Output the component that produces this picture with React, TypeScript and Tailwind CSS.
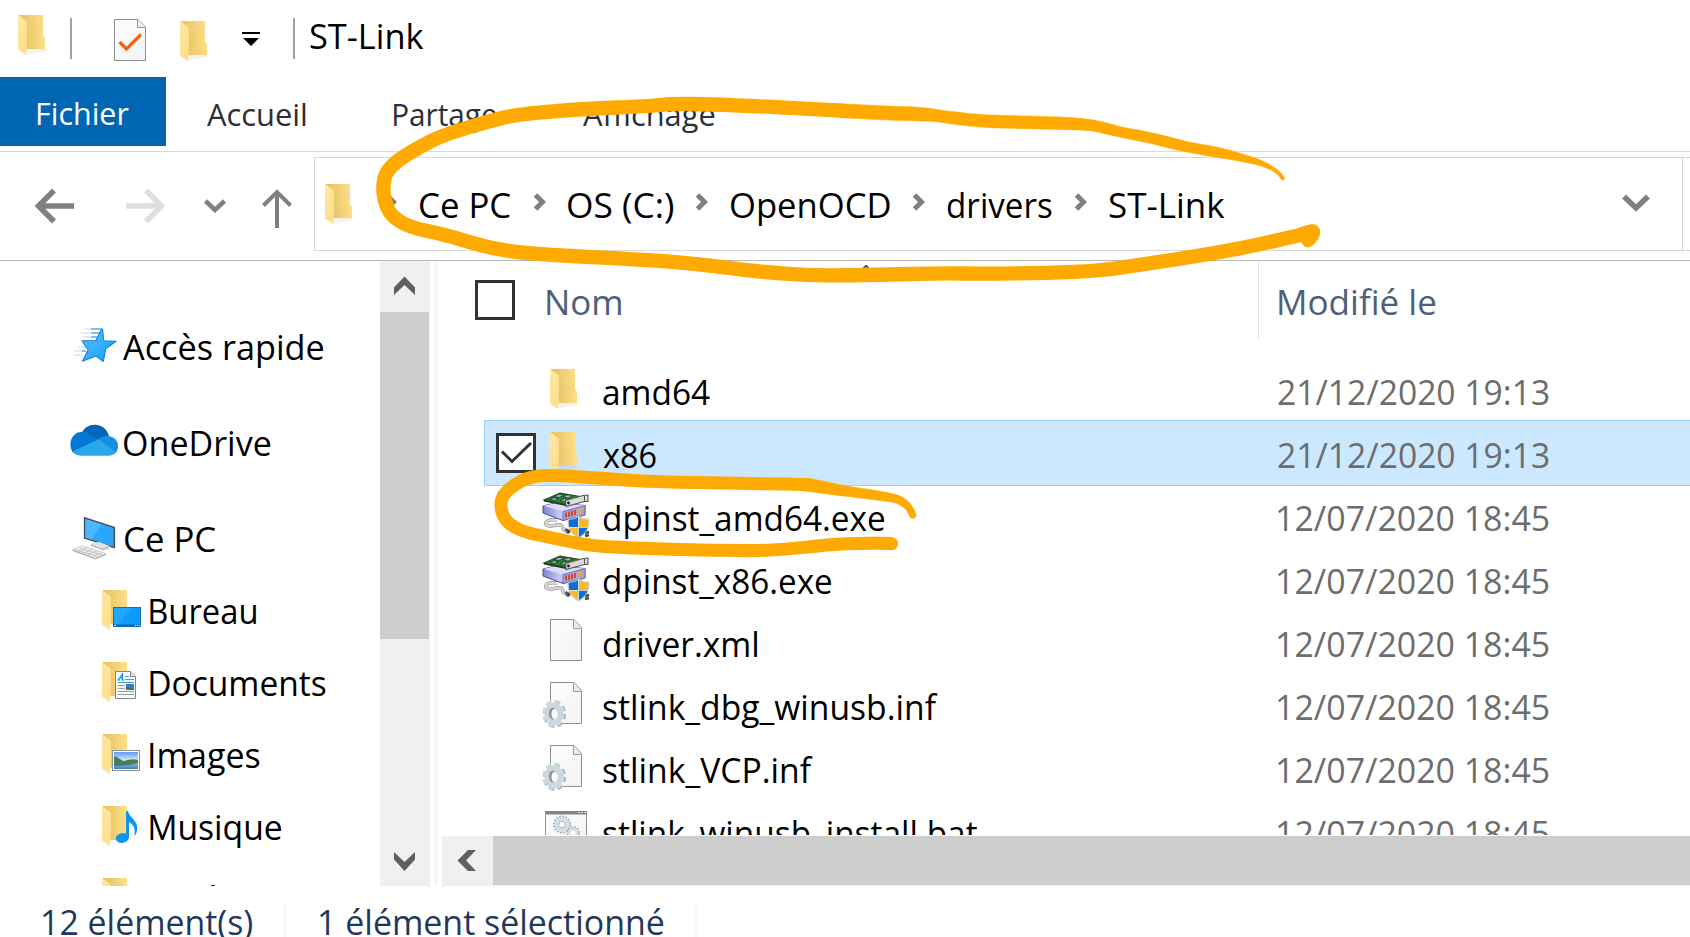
import React, { useLayoutEffect, useRef, useState } from "react";

type LabelProps = { text: string; width: number; className?: string };

/** Text condensed so that its ink fills exactly `width` pixels. */
function Label({ text, width, className = "" }: LabelProps) {
  const ref = useRef<HTMLSpanElement>(null);
  const [fit, setFit] = useState({ scale: 0.95, left: 0 });
  useLayoutEffect(() => {
    const el = ref.current;
    const ctx = document.createElement("canvas").getContext("2d");
    if (!el || !ctx) return;
    const cs = getComputedStyle(el);
    ctx.font = `${cs.fontWeight} ${cs.fontSize} ${cs.fontFamily}`;
    const m = ctx.measureText(text);
    const ink = m.actualBoundingBoxRight + m.actualBoundingBoxLeft;
    setFit({ scale: width / ink, left: m.actualBoundingBoxLeft });
  }, [text, width]);
  return (
    <span className={`block shrink-0 whitespace-nowrap ${className}`} style={{ width }}>
      <span
        ref={ref}
        className="inline-block origin-left"
        style={{ transform: `scaleX(${fit.scale}) translateX(${fit.left}px)` }}
      >
        {text}
      </span>
    </span>
  );
}

function FolderShape() {
  return (
    <>
      <path d="M8 34H30L27 36L9 40Z" fill="#000" opacity=".05" />
      <path d="M0 0H25V20L27 22.5V34H8V8Z" fill="url(#folderBack)" />
      <path d="M0 0L8.8 6.5V30L8 40L0 34.5Z" fill="url(#folderFlap)" />
    </>
  );
}

function Folder({ className = "" }: { className?: string }) {
  return (
    <svg width="30" height="41" viewBox="0 0 30 41" className={`shrink-0 ${className}`}>
      <FolderShape />
    </svg>
  );
}

function Defs() {
  return (
    <svg width="0" height="0" className="absolute">
      <defs>
        <linearGradient id="folderBack" x1="0" y1="0.4" x2="1" y2="0.3">
          <stop offset="0.2" stopColor="#eac464" />
          <stop offset="1" stopColor="#fde08a" />
        </linearGradient>
        <linearGradient id="folderFlap" x1="0" y1="0" x2="0.3" y2="1">
          <stop offset="0" stopColor="#ffe9a6" />
          <stop offset="1" stopColor="#fddf8c" />
        </linearGradient>
        <linearGradient id="paper" x1="0" y1="0" x2="1" y2="1">
          <stop offset="0" stopColor="#fdfdfd" />
          <stop offset="1" stopColor="#f1f3f5" />
        </linearGradient>
        <linearGradient id="starFill" x1="0" y1="0" x2="1" y2="1">
          <stop offset="0" stopColor="#5cc3ff" />
          <stop offset="1" stopColor="#0f9bf7" />
        </linearGradient>
        <linearGradient id="screen" x1="0" y1="0" x2="1" y2="0.6">
          <stop offset="0.5" stopColor="#4fb8fd" />
          <stop offset="0.52" stopColor="#2ba6fb" />
        </linearGradient>
        <linearGradient id="desk" x1="0" y1="0" x2="1" y2="0.6">
          <stop offset="0.5" stopColor="#22a6ff" />
          <stop offset="0.52" stopColor="#0c9bff" />
        </linearGradient>
        <linearGradient id="sky" x1="0" y1="0" x2="0" y2="1">
          <stop offset="0" stopColor="#5b9cf5" />
          <stop offset="0.5" stopColor="#d9eefc" />
          <stop offset="0.7" stopColor="#7fb2d8" />
          <stop offset="1" stopColor="#3f7fb4" />
        </linearGradient>
        <linearGradient id="drive" x1="0" y1="0" x2="1" y2="0">
          <stop offset="0" stopColor="#7f7fd6" />
          <stop offset="0.4" stopColor="#c9c9f8" />
          <stop offset="1" stopColor="#8a8ad8" />
        </linearGradient>
      </defs>
    </svg>
  );
}

function CheckedPage({ className = "" }: { className?: string }) {
  return (
    <svg width="32" height="42" viewBox="0 0 32 42" className={`shrink-0 ${className}`}>
      <path d="M.5.5H24L31.5 8V41.5H.5Z" fill="url(#paper)" stroke="#8f8f8f" />
      <path d="M23.5.5V8.5H31.5" fill="#eee" stroke="#9a9a9a" />
      <path d="M5.5 23L12.5 30L27 15.5" fill="none" stroke="#f4610c" strokeWidth="3.2" />
    </svg>
  );
}

function Page({ gear = false }: { gear?: boolean }) {
  return (
    <svg width="48" height="48" viewBox="0 0 48 48" className="-mt-px shrink-0">
      <path d="M8.5 2.5H32L39.5 10.5V43.5H8.5Z" fill="url(#paper)" stroke="#8f8f8f" />
      <path d="M31.5 2.5V11.500H39.5" fill="#ececec" stroke="#9a9a9a" />
      {gear && (
        <g>
          <ellipse cx="12.500" cy="34" rx="9.500" ry="12" fill="none" stroke="#a3b4c0" strokeWidth="4" strokeDasharray="5 3.5" />
          <ellipse cx="11.300" cy="33.500" rx="9" ry="11.500" fill="none" stroke="#ccd9e1" strokeWidth="4" strokeDasharray="5 3.2" />
          <ellipse cx="12" cy="34" rx="6.500" ry="8.500" fill="#f6f8f9" stroke="#ccd7de" strokeWidth="6" />
          <ellipse cx="10.800" cy="33.500" rx="4" ry="6" fill="#8f979c" />
          <ellipse cx="12.500" cy="34" rx="3" ry="5" fill="#fafbfb" />
        </g>
      )}
    </svg>
  );
}

function BatchFile() {
  return (
    <svg width="48" height="48" viewBox="0 0 48 48" className="-mt-px shrink-0">
      <rect x="3.5" y="5.5" width="41" height="36" fill="url(#paper)" stroke="#8f9396" />
      <rect x="3" y="5" width="42" height="3.5" fill="#7f8689" />
      <path d="M36 6.5h2M39 6.5h2M42 6.5h2" stroke="#dfe3e5" />
      <circle cx="20" cy="18.5" r="8" fill="none" stroke="#a3aeb4" strokeWidth="2" strokeDasharray="1.8 1.35" />
      <circle cx="20" cy="18.5" r="5.4" fill="#fff" stroke="#d3dfe5" strokeWidth="4" />
      <circle cx="20" cy="18.5" r="3.2" fill="#fff" stroke="#9aa6ad" strokeWidth=".8" />
      <circle cx="31" cy="27" r="6" fill="none" stroke="#a3aeb4" strokeWidth="2" strokeDasharray="1.8 1.35" />
      <circle cx="31" cy="27" r="4" fill="#fff" stroke="#d3dfe5" strokeWidth="3" />
    </svg>
  );
}

function DriverInstaller() {
  return (
    <svg width="48" height="48" viewBox="0 0 48 48" className="shrink-0">
      <path d="M15 28C6 27 2 30 4.500 33C8 36 14 31.500 19 33C23 35 18 38 26 40" fill="none" stroke="#9a9a9a" strokeWidth="3.6" />
      <path d="M15 28C6 27 2 30 4.500 33C8 36 14 31.500 19 33C23 35 18 38 26 40" fill="none" stroke="#d6d6d6" strokeWidth="2.2" />
      <path d="M23.500 37l4 4M25 41l3-3M43 41l4-1M43 44l4-1" stroke="#4a4a4a" strokeWidth="2.800" />
      <path d="M1 14L13 11L43 13.5V23L21 28.5L1 21Z" fill="url(#drive)" stroke="#4a4a8e" strokeWidth="1" />
      <path d="M1.500 14L13 11L43 13.5L21 19.5Z" fill="#dcdcfd" />
      <path d="M21 19.5L43 13.5V23L21 28.5Z" fill="#a4a1dc" stroke="#6a68aa" strokeWidth=".8" />
      <path d="M24 20.5v5M27 19.8v5M30 19v5M33 18v5" stroke="#d8401c" strokeWidth="1.8" />
      <path d="M36 17.3v4.6M38.5 16.6v4.6" stroke="#f0b030" strokeWidth="1.6" />
      <path d="M2 8L18 1L38 4.5L24 12.5Z" fill="#1f8a2b" stroke="#174d1b" strokeWidth="1.2" />
      <path d="M2 8L24 12.5V14L2 9.5Z" fill="#1d3d1f" />
      <path d="M12 4.5l5-2.3 5 1-5 2.3zM8 7.5l4-1.8 4.5 1-4 1.8zM21 4.8l5-2 5 1-5 2.3zM18 8.7l4-2 5 1-4 2z" fill="#a9b5ad" stroke="#223" strokeWidth=".7" />
      <path d="M23.5 8.5L41 3.5L46 3V9.5H42.5L24 14.5Z" fill="#d9d9de" stroke="#555" strokeWidth="1.1" />
      <path d="M42.5 4v5.5" stroke="#555" strokeWidth="1" />
      <circle cx="26.5" cy="11" r="1.4" fill="#222" />
      <path d="M36.5 23.500C33 26.500 29.500 27.200 26 27C25.500 36 29 42.500 36.5 46C44 42.500 47.500 36 47 27C43.5 27.200 40 26.500 36.5 23.500Z" fill="#e8eef4" stroke="#8aa0b5" strokeWidth=".5" />
      <path d="M36.100 24.800V35H27.300C26.800 33 26.700 30.500 26.800 27.800C30.500 27.800 33.5 27 36.100 24.800Z" fill="#0d6fd0" />
      <path d="M36.900 24.800V35H45.700C46.200 33 46.300 30.500 46.200 27.800C42.500 27.800 39.500 27 36.900 24.800Z" fill="#fcb827" />
      <path d="M36.100 35.800V45.200C31.500 42.500 28.700 39.500 27.500 35.800Z" fill="#fcb827" />
      <path d="M36.900 35.800V45.200C41.500 42.500 44.300 39.500 45.500 35.800Z" fill="#0d6fd0" />
    </svg>
  );
}

function QuickAccess() {
  return (
    <svg width="48" height="48" viewBox="0 0 48 48" className="shrink-0">
      <g transform="translate(1.200 -1.500)">
        <path d="M13 8.500H30M10 12.500H29M12 16.500H26M7 26.500H15M2.500 30.500H15M3 34.500H12" stroke="#b5def8" strokeWidth="1.200" />
        <path d="M20 8.500H30.500M20 12.500H29.500M20 16.500H27M11 30.500H15" stroke="#2691d8" strokeWidth="1" />
        <path d="M31.300 8.600L32.600 20.300L45 20.800L34.400 28.300L32.200 41L24.800 35.500L11.200 40.800L17 29.500L10.800 20.300L24.600 20.300L30.500 8.600Z" fill="url(#starFill)" stroke="#1482cf" strokeWidth="1.100" strokeLinejoin="round" />
      </g>
    </svg>
  );
}

function OneDriveCloud() {
  return (
    <svg width="48" height="48" viewBox="0 0 48 48" className="shrink-0">
      <path d="M12 15.5C15 9.500 21 6.800 27 8C33.500 9 37.500 13.500 39 19L28.500 24Z" fill="#0364b8" />
      <path d="M1.500 33C-1.500 26 1.500 15.500 12 14.800C15 14.700 17.500 15.700 19.500 17L30 23L14 31L3 36Z" fill="#0078d4" />
      <path d="M28 22.500C31 20 35 18.600 38.500 18.900C44.500 19.500 48 24 48 29C48 32 47 34.500 45 36.500Z" fill="#1490df" />
      <path d="M2.500 34.500L28.500 22.300L46 35C44.500 37.500 41.500 38.800 38.500 38.800H12C8 38.800 4.500 37.500 2.500 34.500Z" fill="#28a8ea" />
    </svg>
  );
}

function Computer() {
  return (
    <svg width="48" height="48" viewBox="0 0 48 48" className="shrink-0">
      <g transform="translate(0 1)">
        <path d="M14 2.500L15.500 2L45.500 12V32.500L44 33.200Z" fill="#d6d9dc" />
        <path d="M14.500 2.800L44.300 12.500V32.500L14.500 23Z" fill="url(#screen)" stroke="#3b4a56" strokeWidth="1.300" />
        <path d="M21 29L29 27L40 31L39 33.500L33 35.500L21 31Z" fill="#b9c1c7" />
        <path d="M21 29L29 27L39 31L32 33.500Z" fill="#dfe3e6" />
        <path d="M2.500 34.500L13 31L36 38.500L25.500 43.300Z" fill="#f0f1f2" stroke="#c3c7ca" strokeWidth=".8" />
        <path d="M6 34.800L28 41.500M10 33.300L32 40M8 36.500L17 32.800M13 38L22 34.500M18 39.500L27 36M23 41L31 37.800" stroke="#b6bbbf" strokeWidth=".8" />
        <path d="M2.500 35.500L25.500 43.800L36 39.500" fill="none" stroke="#979da2" strokeWidth=".9" />
      </g>
    </svg>
  );
}

type Overlay = "desktop" | "document" | "picture" | "music" | "none";

function LibraryFolder({ overlay }: { overlay: Overlay }) {
  return (
    <svg width="42" height="42" viewBox="0 0 42 42" className="shrink-0">
      <path d="M0 0H25V34H8V8Z" fill="url(#folderBack)" />
      <path d="M0 0L8.8 6.500V30L8 40L0 34.500Z" fill="url(#folderFlap)" />
      {overlay === "desktop" && (
        <g>
          <rect x="11.500" y="17.500" width="27" height="19" fill="url(#desk)" stroke="#0d72b8" />
          <path d="M11.500 35.500H38.500" stroke="#0b62a2" strokeWidth="2" />
          <path d="M12.500 35.500h1.500M33 35.500h1.200M35.300 35.500h1.200M37.400 35.500h1" stroke="#fff" />
        </g>
      )}
      {overlay === "document" && (
        <g>
          <path d="M13.500 9.500H28.500L33.500 14.500V36.500H13.500Z" fill="#fbfbfb" stroke="#858585" />
          <path d="M28.500 9.500V14.500H33.500" fill="#e5e5e5" stroke="#858585" />
          <path d="M16 18L20.500 12V18M17.500 16H21M15.500 18H18M19.500 18H22" stroke="#1485cf" fill="none" strokeWidth="1.200" />
          <path d="M23 14.500H27M23 17.500H32M15.500 20.500H32" stroke="#3a9ee0" strokeWidth="1.200" />
          <path d="M15.500 23.500H23M15.500 26.500H23M15.500 29.500H32M15.500 32.500H32" stroke="#9aa0a5" />
          <rect x="24" y="22" width="8" height="6" fill="#3f79b0" />
          <path d="M24 28V25L32 27V28Z" fill="#3d7a52" />
        </g>
      )}
      {overlay === "picture" && (
        <g>
          <rect x="10.500" y="16.500" width="27" height="20" fill="#fff" stroke="#8d9296" />
          <rect x="12" y="18" width="24" height="17" fill="url(#sky)" />
          <path d="M12 22C15 22 18 26 22 27C27 26 31 24.500 36 26V29H12Z" fill="#4d7d55" />
          <path d="M12 29H36L28 31L12 32Z" fill="#2f6a66" opacity=".8" />
        </g>
      )}
      {overlay === "music" && (
        <g fill="#0c96f0">
          <ellipse cx="20.300" cy="32" rx="6.600" ry="4.900" transform="rotate(-12 20.300 32)" />
          <path d="M24 5H26C27 11 35 14 35.300 22C35.300 25 34.500 27 33 29.500C32 29.500 32.500 28 32.700 26C33 20.500 30 18 27 16V32H24Z" />
        </g>
      )}
    </svg>
  );
}

const ribbonTabs = [
  { text: "Accueil", width: 99, className: "ml-[41px]" },
  { text: "Partage", width: 103, className: "ml-[88px]" },
  { text: "Affichage", width: 132, className: "ml-[86px]" },
];

const crumbs = [
  { text: "Ce PC", width: 91, className: "ml-[23px]" },
  { text: "OS (C:)", width: 105, className: "ml-[22px]" },
  { text: "OpenOCD", width: 159, className: "ml-[23px]" },
  { text: "drivers", width: 105, className: "ml-[22px]" },
  { text: "ST-Link", width: 116, className: "ml-[22px]" },
];

const libraries: { text: string; width: number; overlay: Overlay }[] = [
  { text: "Bureau", width: 106, overlay: "desktop" },
  { text: "Documents", width: 176, overlay: "document" },
  { text: "Images", width: 110, overlay: "picture" },
  { text: "Musique", width: 131, overlay: "music" },
  { text: "Vidéos", width: 106, overlay: "none" },
];

type Kind = "folder" | "driver" | "page" | "gear" | "batch";
const files: { name: string; width: number; kind: Kind; date: string; selected?: boolean }[] = [
  { name: "amd64", width: 107, kind: "folder", date: "21/12/2020 19:13" },
  { name: "x86", width: 53, kind: "folder", date: "21/12/2020 19:13", selected: true },
  { name: "dpinst_amd64.exe", width: 281, kind: "driver", date: "12/07/2020 18:45" },
  { name: "dpinst_x86.exe", width: 228, kind: "driver", date: "12/07/2020 18:45" },
  { name: "driver.xml", width: 154, kind: "page", date: "12/07/2020 18:45" },
  { name: "stlink_dbg_winusb.inf", width: 335, kind: "gear", date: "12/07/2020 18:45" },
  { name: "stlink_VCP.inf", width: 210, kind: "gear", date: "12/07/2020 18:45" },
  { name: "stlink_winusb_install.bat", width: 374, kind: "batch", date: "12/07/2020 18:45" },
];

function FileIcon({ kind }: { kind: Kind }) {
  if (kind === "folder") return <Folder className="ml-2 mt-[3px]" />;
  if (kind === "driver") return <DriverInstaller />;
  if (kind === "page") return <Page />;
  if (kind === "gear") return <Page gear />;
  return <BatchFile />;
}

function CheckBox({ checked = false, className = "" }: { checked?: boolean; className?: string }) {
  return (
    <div className={`h-10 w-10 shrink-0 border-[3px] border-[#333] bg-white ${className}`}>
      {checked && (
        <svg width="34" height="34" viewBox="0 0 34 34">
          <path d="M3 15.500L13 25.500L32 7" fill="none" stroke="#333" strokeWidth="3" />
        </svg>
      )}
    </div>
  );
}

function TitleBar() {
  return (
    <div className="flex h-[77px] items-start">
      <Folder className="ml-[18px] mt-[15px]" />
      <div className="ml-[22px] mt-[18px] h-[41px] w-[2px] bg-[#a0a0a0]" />
      <CheckedPage className="ml-[42px] mt-[19px]" />
      <Folder className="ml-[34px] mt-[21px]" />
      <svg width="18" height="14" viewBox="0 0 18 14" className="ml-8 mt-8">
        <path d="M0 0H18V2H0ZM1 6H17L9 14Z" fill="#000" />
      </svg>
      <div className="ml-[33px] mt-[18px] h-[41px] w-[2px] bg-[#a0a0a0]" />
      <Label text="ST-Link" width={114} className="ml-[15px] leading-[70px]" />
    </div>
  );
}

function Ribbon() {
  return (
    <div className="flex h-[75px] border-b border-[#d9d9d9] text-[31.500px] text-[#2b2f36]">
      <div className="h-[69px] w-[166px] bg-[#0065b3] pl-[38px] text-white">
        <Label text="Fichier" width={91} className="leading-[72px]" />
      </div>
      {ribbonTabs.map((t) => (
        <Label key={t.text} text={t.text} width={t.width} className={`${t.className} leading-[73px]`} />
      ))}
    </div>
  );
}

function AddressRow() {
  return (
    <div className="flex h-[109px] border-b border-[#b9b9b9] pt-[5px]">
      <svg width="314" height="94" viewBox="0 157 314 94" fill="none" className="shrink-0">
        <path d="M74 206H39M54 190.500L38.500 206L54 221.500" stroke="#808080" strokeWidth="5.500" />
        <path d="M126 206H161M146 190.500L161.500 206L146 221.500" stroke="#dedede" strokeWidth="5.500" />
        <path d="M205.500 201L215 210L224.500 201" stroke="#808080" strokeWidth="4.500" />
        <path d="M277 228V192M263.500 205.500L277 192L290.500 205.500" stroke="#808080" strokeWidth="4" />
      </svg>
      <div className="flex h-[94px] w-[1369px] shrink-0 items-center border border-[#d9d9d9]">
        <Folder className="ml-[10px]" />
        {crumbs.map((c, i) => (
          <React.Fragment key={c.text}>
            <svg
              width="13"
              height="18"
              viewBox="0 0 13 18"
              className={`shrink-0 -mt-1 ${i === 0 ? "ml-[29px]" : "ml-[22px]"}`}
            >
              <path d="M2.500 2L9.500 9L2.500 16" fill="none" stroke="#808080" strokeWidth="5" />
            </svg>
            <Label text={c.text} width={c.width} className={`${c.className} leading-[92px]`} />
          </React.Fragment>
        ))}
        <svg width="28" height="18" viewBox="0 0 28 18" className="-mt-0.5 ml-auto mr-[32px]">
          <path d="M2 2.500L14 14L26 2.500" fill="none" stroke="#808080" strokeWidth="5.500" />
        </svg>
      </div>
      <div className="h-[94px] flex-1 border-y border-[#d9d9d9]" />
    </div>
  );
}

function Sidebar() {
  return (
    <div className="h-[625px] w-[380px] shrink-0 overflow-hidden pt-[37px]">
      <div className="flex h-24 items-center pl-[70px]">
        <QuickAccess />
        <Label text="Accès rapide" width={200} className="ml-[5px]" />
      </div>
      <div className="flex h-24 items-center pl-[70px]">
        <div className="-mt-0.5"><OneDriveCloud /></div>
        <Label text="OneDrive" width={146} className="ml-[6px]" />
      </div>
      <div className="mt-3 flex h-[72px] items-center pl-[70px]">
        <Computer />
        <Label text="Ce PC" width={91} className="ml-[7px]" />
      </div>
      {libraries.map((l) => (
        <div key={l.text} className="flex h-[72px] items-center pl-[102px]">
          <div className="mt-[2px]"><LibraryFolder overlay={l.overlay} /></div>
          <Label text={l.text} width={l.width} className="ml-[6px]" />
        </div>
      ))}
    </div>
  );
}

function VerticalScrollbar() {
  return (
    <div className="h-[625px] w-[50px] shrink-0 bg-[#f0f0f0]">
      <svg width="50" height="51" viewBox="0 0 50 51">
        <path d="M14 34V26.500L24.500 15.500L35 26.500V34L24.500 24Z" fill="#606060" />
      </svg>
      <div className="h-[327px] w-[49px] bg-[#cdcdcd]" />
      <svg width="50" height="247" viewBox="0 0 50 247">
        <path d="M14 213V220.500L24.500 232L35 220.500V213L24.500 223Z" fill="#606060" />
      </svg>
    </div>
  );
}

function FileList() {
  return (
    <div className="flex h-[625px] min-w-0 flex-1 flex-col">
      <div className="h-[574px] overflow-hidden">
        <div className="flex h-[96px] text-[#4c607a]">
          <CheckBox className="ml-[37px] mt-[19px]" />
          <Label text="Nom" width={74} className="ml-[32px] leading-[80px]" />
          <svg width="12" height="8" viewBox="0 0 12 8" className="ml-[239px] mt-[3px] shrink-0">
            <path d="M1.500 6L6 1.800L10.500 6" fill="none" stroke="#333" strokeWidth="1.600" />
          </svg>
          <div className="ml-[386px] h-[78px] w-px bg-[#e3e3e3]" />
          <Label text="Modifié le" width={156} className="ml-5 leading-[80px]" />
        </div>
        {files.map((f) => (
          <div
            key={f.name}
            className={`ml-[46px] flex ${f.selected ? "relative -mb-[3px] h-[66px] bg-[#cce8ff] shadow-[inset_1px_1px_#99d1ff,inset_0_-1px_#99d1ff]" : "h-[63px]"}`}
          >
            <div className="w-[58px] shrink-0 pl-3 pt-[13px]">{f.selected && <CheckBox checked />}</div>
            <div className="w-[61px] shrink-0 pt-[9px]">
              <FileIcon kind={f.kind} />
            </div>
            <Label text={f.name} width={f.width} className="leading-[68px]" />
            <div className="ml-auto w-[412px] shrink-0 text-[#6d6d6d]">
              <Label text={f.date} width={271} className="leading-[68px]" />
            </div>
          </div>
        ))}
      </div>
      <div className="ml-1 mt-px flex h-[50px] border-b border-[#f0f0f0]">
        <div className="h-[49px] w-[51px] bg-[#f0f0f0]">
          <svg width="51" height="49" viewBox="0 0 51 49">
            <path d="M34 14H26L15.500 24.500L26 35H34L24 24.500Z" fill="#606060" />
          </svg>
        </div>
        <div className="h-[49px] flex-1 bg-[#cdcdcd]" />
      </div>
    </div>
  );
}

function StatusBar() {
  return (
    <div className="flex h-[51px] overflow-hidden pt-[18px] text-[#1e395b]">
      <Label text="12 élément(s)" width={209} className="ml-[43px] leading-[34px]" />
      <div className="ml-8 w-[3px] bg-[#f7f7f7]" />
      <Label text="1 élément sélectionné" width={343} className="ml-[33px] leading-[34px]" />
      <div className="ml-8 w-[3px] bg-[#f7f7f7]" />
    </div>
  );
}

type Point = [number, number];

/** Smooth curve through the midpoints of a polyline. */
function smooth(points: Point[]): string {
  let d = `M${points[0][0]} ${points[0][1]}`;
  for (let i = 1; i < points.length - 1; i++) {
    const [x, y] = points[i];
    const [nx, ny] = points[i + 1];
    d += `Q${x} ${y} ${(x + nx) / 2} ${(y + ny) / 2}`;
  }
  const last = points[points.length - 1];
  return `${d}L${last[0]} ${last[1]}`;
}

const pathMark: Point[] = [
  [842, 110.700], [800, 108.300], [760, 106.300],
  [710, 104.300], [673, 103.700], [647, 106.300], [587, 108.700], [520, 114], [493, 120], [443, 135], [420, 146.700],
  [399, 159.300], [386, 171.700], [383, 185], [384, 200], [391, 216], [410, 227.500], [443, 234], [493, 249.200],
  [540, 254.700], [633, 259], [693, 263.300], [760, 272], [810, 275.300], [840, 275.300], [890, 274.700],
  [933, 273.300], [990, 273.700], [1047, 273], [1100, 270.700], [1140, 264.700], [1207, 254.700], [1257, 245],
  [1300, 235], [1312, 231.700],
];

const fileMark: Point[] = [
  [812, 485.500], [807, 484.500], [763, 483.700], [713, 482.700], [647, 481.700], [590, 477.300], [553, 475],
  [530, 476.500], [512, 486], [501.500, 497], [500.500, 509], [506, 522], [523, 532], [553, 538], [590, 546],
  [647, 548.700], [713, 550.300], [773, 550.900], [830, 544.300], [863, 543], [891.700, 543.600],
];

function Marker() {
  return (
    <svg
      width="1690"
      height="937"
      viewBox="0 0 1690 937"
      className="pointer-events-none absolute left-0 top-0"
      fill="none"
      stroke="#ffaa00"
      strokeLinecap="round"
      strokeLinejoin="round"
    >
      <path d={smooth(pathMark)} strokeWidth="14.300" strokeLinecap="butt" />
      <path
        d="M840 103.700L893 106.300C935 107 933 110 957 112C975 114.300 985 114.800 1000 115.300L1060 117C1093 118.500 1100 121 1123 127.300C1138 130 1150 131.500 1187 141.700C1215 146.500 1225 148 1253 157.300C1274 164.500 1282 173 1284.700 178.300C1284.500 180 1282.500 180.500 1281.500 179.500C1276 171 1267 167 1250 163.300C1215 156 1195 155.500 1153 144C1135 140 1115 136.500 1098 132C1092 130.800 1085 130.300 1079 130L1040 129L990 127.700C965 126.500 945 122.500 930 121.300L893 120.300L840 117.700Z"
        fill="#ffaa00"
        strokeWidth=".5"
      />
      <path d="M1299 228L1310 225C1318 223 1321.500 230 1319 236C1316 243 1311 248.500 1305 246.500L1302 243Z" fill="#ffaa00" strokeWidth="1" />
      <path d={smooth(fileMark)} strokeWidth="13" strokeLinecap="butt" />
      <path d="M888 543.600H891.700" strokeWidth="12.800" />
      <path
        d="M806 478C820 480 832 483.500 850 486.500C867 489.500 885 491 899 495.500C910 500 914.500 509 916 515C916 519 911 519.500 909.500 516.500C907 509 902 504 890 501.800C870 499 835 495.500 806 491Z"
        fill="#ffaa00"
        strokeWidth=".5"
      />
    </svg>
  );
}

export default function App() {
  return (
    <div className="relative h-[937px] w-[1690px] overflow-hidden bg-white font-['Open_Sans','Noto_Sans',sans-serif] text-[35.300px] leading-[48px] text-black">
      <Defs />
      <TitleBar />
      <Ribbon />
      <AddressRow />
      <div className="flex h-[625px]">
        <Sidebar />
        <VerticalScrollbar />
        <div className="ml-1 w-1 shrink-0 bg-[#f7f7f7]" />
        <FileList />
      </div>
      <StatusBar />
      <Marker />
    </div>
  );
}
